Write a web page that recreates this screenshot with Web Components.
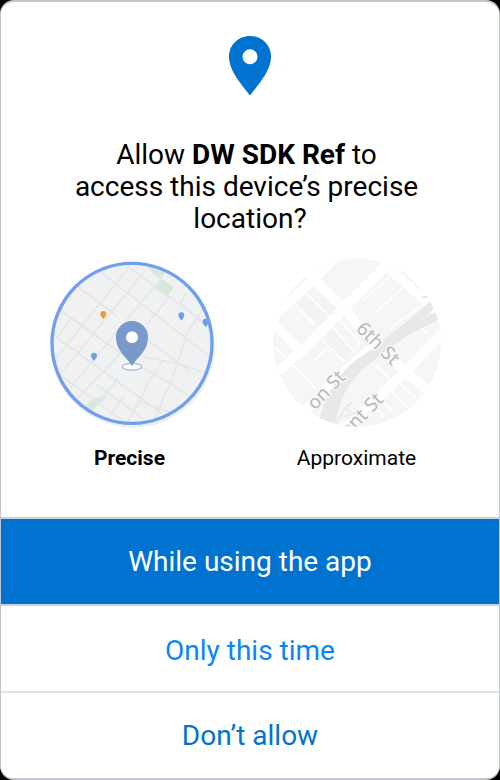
<!DOCTYPE html>
<html lang="en">
<head>
<meta charset="utf-8">
<meta name="viewport" content="width=device-width, initial-scale=1">
<title>Location permission</title>
<style>
html{background:#000}
body{margin:0;font-family:Roboto,"Liberation Sans",sans-serif;color:#000}
</style>
</head>
<body>
<permission-dialog>
  <pin-icon slot="icon"></pin-icon>
  <span slot="title">Allow <b>DW SDK Ref</b> to access this device’s precise location?</span>
  <accuracy-picker slot="body"></accuracy-picker>
  <action-button slot="actions" kind="primary">While using the app</action-button>
  <action-button slot="actions" kind="bright">Only this time</action-button>
  <action-button slot="actions" kind="plain">Don’t allow</action-button>
</permission-dialog>

<script>
function define(name, html) {
  const t = document.createElement('template');
  t.innerHTML = html;
  customElements.define(name, class extends HTMLElement {
    constructor() {
      super();
      this.attachShadow({mode: 'open'}).append(t.content.cloneNode(true));
    }
  });
}

define('pin-icon', `
<style>:host{display:block}svg{display:block;width:42px;height:60px;margin:0 auto}</style>
<svg viewBox="0 0 42 60" aria-hidden="true"><path fill="#0073d1" fill-rule="evenodd" d="M21 0C9.200 0 0 9 0 20.800C0 35 13 49 21 59.500C29 49 42 35 42 20.800C42 9 32.800 0 21 0ZM21 13.200a7.500 7.500 0 1 1 0 15a7.500 7.500 0 1 1 0-15Z"/></svg>`);

define('precise-map', `
<style>:host{display:block}svg{display:block;width:190px;height:190px}</style>
<svg viewBox="-15 0 570 570" aria-hidden="true">
  <defs>
    <clipPath id="c"><circle cx="276" cy="280" r="240"/></clipPath>
    <path id="d" d="M0 10C-5 3-9-1-9-6A9 9 0 0 1 9-6C9-1 5 3 0 10Z"/>
  </defs>
  <circle cx="279" cy="287" r="246" fill="#f0f0f1"/>
  <g clip-path="url(#c)">
    <rect x="30" y="30" width="500" height="500" fill="#eff1f2"/>
    <path fill="#d5e8d9" d="M318 45L376 70L361 84L340 72ZM366 86L402 112L381 140L343 114ZM128 478Q160 435 202 439L150 488Z"/>
    <g fill="none" stroke="#e4e6e7" stroke-width="5">
      <path d="M265 50L520 238M180 65L520 328M110 108L230 198M330 275L450 365M60 180L300 350L390 398L460 450M40 255L365 490M60 375L260 520M170 404L320 515"/>
      <path d="M270 48L36 340M315 62L55 380M366 82L90 415M388 140L320 225M240 310L110 450M235 385L145 492M90 208L50 265M252 440L200 508M298 450L262 520"/>
      <path d="M310 320L412 341L520 376M370 330L326 395L300 455L260 520M490 175L442 246L412 341L390 400L340 515M440 130L422 158L510 240M300 455L410 495"/>
    </g>
    <use href="#d" x="190" y="198" fill="#e5a03c"/>
    <g fill="#6d9eed"><use href="#d" x="424" y="202"/><use href="#d" x="162" y="323"/><use href="#d" x="497" y="221"/></g>
  </g>
  <circle cx="276" cy="280" r="240" fill="none" stroke="#709ff0" stroke-width="10"/>
  <ellipse cx="276" cy="350" rx="29" ry="10" fill="#fff" stroke="#a6bddd" stroke-width="4"/>
  <path fill="#7999c9" d="M276 349C267 327 228 306 228 261A48 48 0 0 1 324 261C324 306 285 327 276 349Z"/>
  <circle cx="276" cy="262" r="18" fill="#fff"/>
</svg>`);

define('approximate-map', `
<style>:host{display:block}svg{display:block;width:190px;height:190px}
text{font-family:"Noto Sans","Open Sans",sans-serif;font-size:57px;fill:#b8b8b8;stroke:#f8f8f8;stroke-width:8px;paint-order:stroke;stroke-linejoin:round}</style>
<svg viewBox="0 0 570 570" aria-hidden="true">
  <defs><clipPath id="c"><circle cx="285" cy="278" r="252"/></clipPath></defs>
  <g clip-path="url(#c)">
    <rect x="30" y="20" width="520" height="520" fill="#f6f6f6"/>
    <path fill="#f3f3f3" d="M140 125L170 155L200 130L232 178L180 230L108 160ZM180 270L210 238L275 305L240 340Z"/>
    <g fill="none" stroke="#fff" stroke-width="5">
      <path d="M100 163L157 225M135 132L204 202M325 122L344 140M306 150L385 78M340 190L430 105M205 220L278 310M233 208L295 280M180 268L246 335M154 335L192 298L204 307M40 292L76 330M93 347L160 415M416 73L486 140M385 235L505 148M405 270L500 205M446 242L468 262M462 218L495 250M342 345L384 388M340 430L392 485M376 408L440 475M402 388L462 446M335 465L365 500"/>
    </g>
    <g fill="none" stroke="#fff" stroke-width="28">
      <path d="M385 35L245 175L118 305L40 372M225 18L155 88L45 190L20 225M105 25L155 88L245 175L330 270L430 365L510 430M360 38L490 150L560 210M20 205L118 305M560 230L430 365L235 550M350 275L225 385L110 500"/>
    </g>
    <path fill="#e8e8e8" d="M170 525C181 464 203 412 250 359C292 314 337 302 363 273C400 240 449 207 507 151L516 174Q500 197 468 212L522 186L529 210C460 244 417 263 370 305C337 333 291 359 265 402C238 440 234 465 217 530Z"/>
    <path d="M222 525Q239 480 270 456M240 500L287 488M256 462L260 486" fill="none" stroke="#e8e8e8" stroke-width="5"/>
    <path d="M481 141H496" stroke="#e4e4e4" stroke-width="6"/>
    <text transform="translate(280 239) rotate(45)">6th St</text>
    <text transform="translate(159 482) rotate(-46)">on St</text>
    <text transform="translate(259 563) rotate(-46)">ent St</text>
  </g>
</svg>`);

define('accuracy-picker', `
<style>
:host{display:block}
fieldset{display:grid;grid-template-columns:1fr 1fr;margin:0;border:0;padding:0 29px 0 15px}
label{display:flex;flex-direction:column;align-items:center;font-size:21px;line-height:24px;gap:6px;cursor:pointer}
label:has(:checked){font-weight:700}
input{position:absolute;opacity:0;pointer-events:none}
</style>
<fieldset aria-label="Location accuracy">
  <label><input type="radio" name="accuracy" checked><precise-map></precise-map><span>Precise</span></label>
  <label><input type="radio" name="accuracy"><approximate-map></approximate-map><span>Approximate</span></label>
</fieldset>`);

define('action-button', `
<style>
:host{display:block;border-top:2px solid #e2e3e5}
:host([kind=primary]){--ink:#fff;--fill:#0073d1;border-top-color:#cdd3da}
:host([kind=bright]){--ink:#0a84ff;--pad:28px 16px 24px;border-top-color:#cdd3da}
:host([kind=plain]){--ink:#0073d1}
button{display:block;width:100%;padding:var(--pad,26px 16px);border:0;margin:0;background:var(--fill,#fff);color:var(--ink);font:inherit;font-size:28px;line-height:33px;cursor:pointer}
</style>
<button type="button"><slot></slot></button>`);

define('permission-dialog', `
<style>
:host{display:block}
section{box-sizing:border-box;min-height:100vh;display:flex;flex-direction:column;background:#fff;border:2px solid #c3c6cd;border-width:2px 1px;border-radius:14px;overflow:hidden;padding-top:34px}
h1{margin:43px auto 15px;max-width:354px;font-size:28px;line-height:32px;font-weight:400;text-align:center;white-space:break-spaces}
.actions{margin-top:auto}
</style>
<section role="dialog" aria-labelledby="t">
  <slot name="icon"></slot>
  <h1 id="t"><slot name="title"></slot></h1>
  <slot name="body"></slot>
  <div class="actions"><slot name="actions"></slot></div>
</section>`);
</script>
</body>
</html>
